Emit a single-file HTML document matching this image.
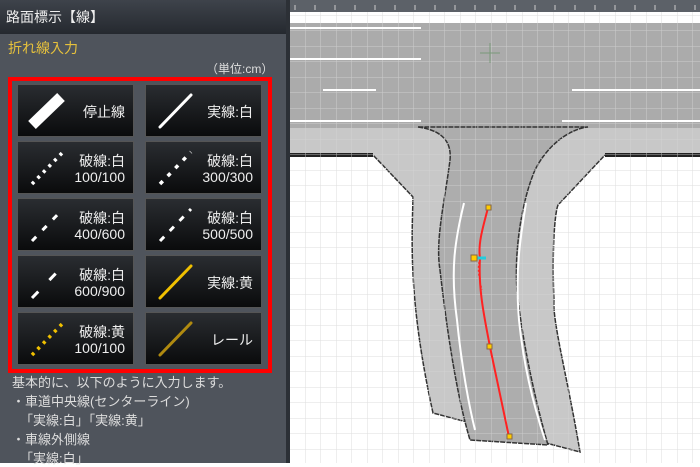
<!DOCTYPE html><html><head><meta charset="utf-8"><style>
*{margin:0;padding:0;box-sizing:border-box}
body{width:700px;height:463px;overflow:hidden;position:relative;background:#fff;font-family:"Liberation Sans","Noto Sans CJK JP",sans-serif}
#left{position:absolute;left:0;top:0;width:286px;height:463px;background:#4f545c}
#bar{position:absolute;left:0;top:0;width:286px;height:34px;background:linear-gradient(#3e434b,#25292f);color:#eee;font-size:14px;line-height:34px;padding-left:6px}
.t{position:absolute;color:#ddd;font-size:13px;white-space:nowrap}
#red{position:absolute;left:8px;top:77px;width:264px;height:296px;border:4px solid #f00}
.b{position:absolute;width:117px;height:53px;background:linear-gradient(#2a2d31,#0a0b0c);border:1px solid #555}
.b span{position:absolute;right:8px;top:0;height:53px;display:flex;flex-direction:column;justify-content:center;text-align:right;color:#eee;font-size:14px;line-height:16px}
.b svg{position:absolute;left:0;top:0}
</style></head><body>
<div id="left">
<div id="bar">路面標示【線】</div>
<div class="t" style="left:8px;top:38px;color:#e6c13c;font-size:14px">折れ線入力</div>
<div class="t" style="left:206px;top:60px;font-size:12px">（単位:cm）</div>
<div id="red"></div>
<div class="b" style="left:17px;top:84px"><svg width="117" height="53"><line x1="14" y1="40" x2="43" y2="12" stroke="#fff" stroke-width="11"/></svg><span>停止線</span></div>
<div class="b" style="left:145px;top:84px"><svg width="117" height="53"><line x1="14" y1="42" x2="45" y2="10" stroke="#fff" stroke-width="3" stroke-linecap="round"/></svg><span>実線:白</span></div>
<div class="b" style="left:17px;top:141px"><svg width="117" height="53"><line x1="14" y1="42" x2="45" y2="10" stroke="#fff" stroke-width="3.5" stroke-dasharray="3,5"/></svg><span>破線:白<br>100/100</span></div>
<div class="b" style="left:145px;top:141px"><svg width="117" height="53"><line x1="14" y1="42" x2="45" y2="10" stroke="#fff" stroke-width="3.5" stroke-dasharray="4,7"/></svg><span>破線:白<br>300/300</span></div>
<div class="b" style="left:17px;top:198px"><svg width="117" height="53"><line x1="14" y1="42" x2="45" y2="10" stroke="#fff" stroke-width="3" stroke-dasharray="6,9"/></svg><span>破線:白<br>400/600</span></div>
<div class="b" style="left:145px;top:198px"><svg width="117" height="53"><line x1="14" y1="42" x2="45" y2="10" stroke="#fff" stroke-width="3" stroke-dasharray="6,8"/></svg><span>破線:白<br>500/500</span></div>
<div class="b" style="left:17px;top:255px"><svg width="117" height="53"><line x1="14" y1="42" x2="45" y2="10" stroke="#fff" stroke-width="3" stroke-dasharray="9,16"/></svg><span>破線:白<br>600/900</span></div>
<div class="b" style="left:145px;top:255px"><svg width="117" height="53"><line x1="14" y1="42" x2="45" y2="10" stroke="#f0c000" stroke-width="3" stroke-linecap="round"/></svg><span>実線:黄</span></div>
<div class="b" style="left:17px;top:312px"><svg width="117" height="53"><line x1="14" y1="42" x2="45" y2="10" stroke="#f0c000" stroke-width="3.5" stroke-dasharray="3,5"/></svg><span>破線:黄<br>100/100</span></div>
<div class="b" style="left:145px;top:312px"><svg width="117" height="53"><line x1="14" y1="42" x2="45" y2="10" stroke="#b08a10" stroke-width="3" stroke-linecap="round"/></svg><span>レール</span></div>
<div class="t" style="left:12px;top:372px">基本的に、以下のように入力します。</div>
<div class="t" style="left:12px;top:391px">・車道中央線(センターライン)</div>
<div class="t" style="left:20px;top:410px">「実線:白」「実線:黄」</div>
<div class="t" style="left:12px;top:429px">・車線外側線</div>
<div class="t" style="left:20px;top:448px">「実線:白」</div>
</div>
<div style="position:absolute;left:286px;top:0;width:4px;height:463px;background:#2c3036"></div>
<svg style="position:absolute;left:290px;top:0" width="410" height="463">
<defs><pattern id="g" width="15.5" height="15.5" patternUnits="userSpaceOnUse"><path d="M15.5 0V15.5H0" fill="none" stroke="#d4d4d4" stroke-width="1"/></pattern></defs>
<rect width="410" height="463" fill="#fff"/>
<rect y="23" width="410" height="106" fill="#ababab"/>
<rect y="128" width="410" height="27" fill="#c8c8c8"/>
<path d="M0 155H83L123 197C122 240 118 300 143 413L290 452C278 380 262 320 264 300C262 260 264 215 268 205L315 155H410" fill="#c8c8c8" stroke="#333" stroke-width="1.5" stroke-dasharray="5,1"/>
<rect y="153" width="83" height="4" fill="#222"/><rect x="315" y="153" width="95" height="4" fill="#222"/>
<path d="M128 127C150 130 162 140 160 160C155 200 145 240 150 270C158 340 168 400 180 440L258 445C245 400 232 340 227 290C224 250 232 200 245 170C260 140 285 128 298 127Z" fill="#adadad" stroke="#333" stroke-width="1.5" stroke-dasharray="5,1"/>
<rect y="12" width="410" height="451" fill="url(#g)" opacity="0.8"/>
<rect width="410" height="12" fill="#5c6168"/>
<g stroke="#ccc" stroke-width="1"><path d="M5 5V10M25 5V10M45 5V10M65 5V10M85 5V10M105 5V10M125 5V10M145 5V10M165 5V10M185 5V10M205 5V10M225 5V10M245 5V10M265 5V10M285 5V10M305 5V10M325 5V10M345 5V10M365 5V10M385 5V10M405 5V10"/></g>
<path d="M174 203C165 240 160 270 167 320C172 370 180 410 185 430" fill="none" stroke="#fff" stroke-width="2"/>
<path d="M236 203C230 240 225 270 229 320C234 370 245 410 255 440" fill="none" stroke="#fff" stroke-width="2"/>
<g fill="#fff"><rect x="0" y="27" width="131" height="2"/><rect x="0" y="58" width="131" height="2"/><rect x="33" y="89" width="53" height="2"/><rect x="282" y="89" width="128" height="2"/><rect x="0" y="120" width="131" height="2"/><rect x="272" y="120" width="138" height="2"/></g>
<path d="M198 208C192 230 188 245 190 258C188 290 195 320 200 347L219 437" fill="none" stroke="#f22" stroke-width="2"/>
<path d="M190 258C186 270 190 280 192 290" fill="none" stroke="#f22" stroke-width="1" stroke-dasharray="2,2"/>
<line x1="186" y1="258" x2="196" y2="258" stroke="#2cd" stroke-width="3"/>
<g fill="#fc0" stroke="#864" stroke-width="1"><rect x="196" y="205" width="5" height="5"/><rect x="181" y="255" width="6" height="6"/><rect x="197" y="344" width="5" height="5"/><rect x="217" y="434" width="5" height="5"/></g>
<path d="M190 53H210M200 43V63" stroke="#7a9a7a" stroke-width="1"/>
</svg>
</body></html>
